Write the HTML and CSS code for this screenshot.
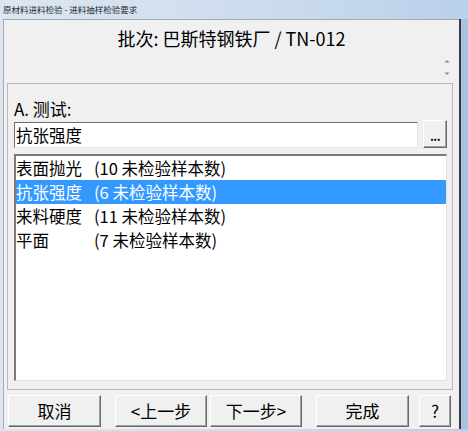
FILE: index.html
```html
<!DOCTYPE html>
<html lang="zh-CN">
<head>
<meta charset="utf-8">
<title>原材料进料检验 - 进料抽样检验要求</title>
<link rel="stylesheet" href="styles.css">
</head>
<body>
<div class="window">
  <div class="titlebar">原材料进料检验 - 进料抽样检验要求</div>
  <div class="frame">
    <div class="client">
      <div class="header">
        <div class="batch">批次: 巴斯特钢铁厂 / TN-012</div>
        <div class="spin">
          <svg width="10" height="24" viewBox="0 0 10 24">
            <path d="M2.5 7.5 L5 5 L7.5 7.5 Z" fill="#8a8a8a"/>
            <path d="M2.5 17.5 L5 20 L7.5 17.5 Z" fill="#8a8a8a"/>
          </svg>
        </div>
      </div>
      <div class="panel">
        <div class="label">A. 测试:</div>
        <div class="inputrow">
          <div class="input">抗张强度</div>
          <div class="browse">...</div>
        </div>
        <div class="list">
          <div class="row"><span>表面抛光</span><span>(10 未检验样本数)</span></div>
          <div class="row selected"><span>抗张强度</span><span>(6 未检验样本数)</span></div>
          <div class="row"><span>来料硬度</span><span>(11 未检验样本数)</span></div>
          <div class="row"><span>平面</span><span>(7 未检验样本数)</span></div>
        </div>
      </div>
      <div class="buttons">
        <div class="btn b1">取消</div>
        <div class="btn b2">&lt;上一步</div>
        <div class="btn b3">下一步&gt;</div>
        <div class="btn b4">完成</div>
        <div class="btn b5">?</div>
      </div>
    </div>
    <div class="rframe"></div>
  </div>
</div>
</body>
</html>
```
FILE: styles.css
```css
* { box-sizing: border-box; margin: 0; padding: 0; }
html, body { width: 468px; height: 431px; overflow: hidden; }
body {
  background: #cfdcec;
  font-family: "Noto Sans CJK SC", "Noto Sans", sans-serif;
  color: #000;
}
.window {
  width: 468px;
  height: 431px;
  display: flex;
  flex-direction: column;
  background: linear-gradient(90deg, #dbe6f2 0%, #cddcee 55%, #b9d0ea 100%);
}
.titlebar {
  height: 19px;
  padding-left: 3px;
  font-size: 8.5px;
  line-height: 19px;
  color: #2c2c2c;
  white-space: nowrap;
}
.frame {
  flex: 1;
  display: flex;
  padding-left: 3px;
  padding-bottom: 2px;
}
.client {
  width: 456px;
  display: flex;
  flex-direction: column;
  background: #f0f0f0;
  border-top: 1px solid #a9a9a9;
  border-left: 1px solid #a9a9a9;
}
.rframe {
  width: 9px;
  border-left: 2px solid #3a3a3a;
  background: #a8c3e2;
}
.header {
  height: 63px;
  display: flex;
  flex-direction: column;
}
.batch {
  margin-top: 6px;
  font-size: 18px;
  line-height: 24px;
  text-align: center;
  white-space: nowrap;
}
.spin {
  align-self: flex-end;
  margin-top: 5px;
  margin-right: 7px;
  width: 10px;
  height: 24px;
}
.spin svg { display: block; }
.panel {
  height: 307px;
  margin: 0 6px 0 3px;
  border: 1px solid #b8b8b8;
  padding: 14px 5px 7px 6px;
  display: flex;
  flex-direction: column;
}
.label {
  font-size: 17px;
  line-height: 22px;
  height: 22px;
  white-space: nowrap;
}
.inputrow {
  height: 28px;
  display: flex;
  gap: 5px;
}
.input {
  flex: 1;
  margin-top: 2px;
  height: 26px;
  background: #fff;
  border-top: 1px solid #6e6e6e;
  border-left: 1px solid #6e6e6e;
  border-right: 1px solid #e3e3e3;
  border-bottom: 1px solid #e3e3e3;
  font-size: 16.5px;
  line-height: 24px;
  padding-left: 1px;
  white-space: nowrap;
}
.browse {
  width: 24px;
  height: 28px;
  background: #f0f0f0;
  border: 1px solid;
  border-color: #ffffff #6a6a6a #6a6a6a #ffffff;
  box-shadow: inset -1px -1px 0 #a0a0a0;
  font-size: 12px;
  font-weight: bold;
  line-height: 30px;
  text-align: center;
  letter-spacing: -0.5px;
}
.list {
  margin-top: 6px;
  height: 227px;
  background: #fff;
  border-top: 2px solid #7a7a7a;
  border-left: 2px solid #7a7a7a;
  border-right: 1px solid #e3e3e3;
  border-bottom: 1px solid #e3e3e3;
}
.row {
  height: 24px;
  display: grid;
  grid-template-columns: 78px 1fr;
  font-size: 16.5px;
  line-height: 24px;
  white-space: nowrap;
}
.row.selected {
  background: #3399ff;
  color: #fff;
}
.buttons {
  display: flex;
  padding: 5px 0 2px 4px;
}
.btn {
  height: 32px;
  background: #f0f0f0;
  border: 1px solid;
  border-color: #ffffff #6a6a6a #6a6a6a #ffffff;
  box-shadow: inset -1px -1px 0 #a0a0a0;
  font-size: 17px;
  line-height: 30px;
  text-align: center;
  white-space: nowrap;
}
.b1 { width: 93px; }
.b2 { width: 92px; margin-left: 14px; }
.b3 { width: 92px; margin-left: 3px; }
.b4 { width: 93px; margin-left: 14px; }
.b5 { width: 32px; margin-left: 10px; }
```
